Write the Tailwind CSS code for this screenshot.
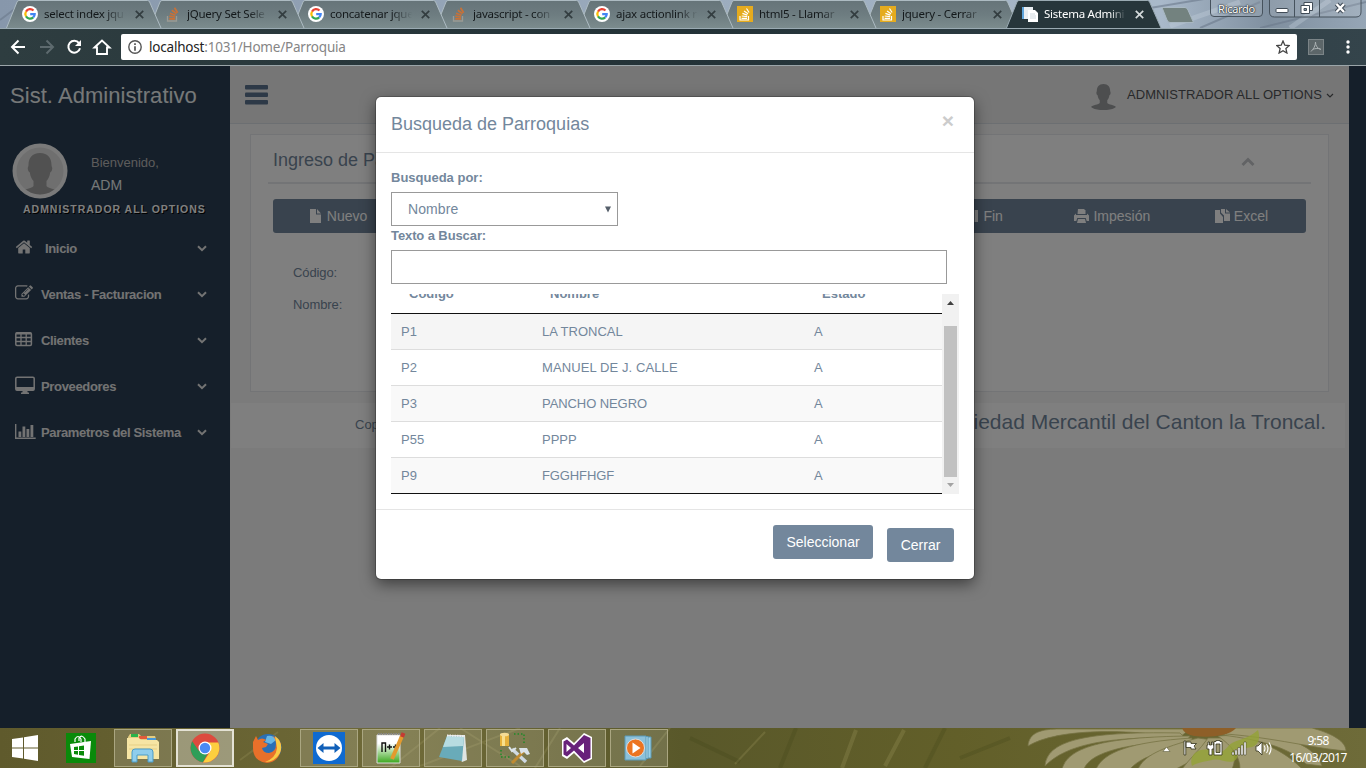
<!DOCTYPE html>
<html lang="es">
<head>
<meta charset="utf-8">
<title>Sistema Administrativo</title>
<script src="https://cdn.jsdelivr.net/npm/@tailwindcss/browser@4"></script>
</head>
<body class="w-[1366px] h-[768px] overflow-hidden flex flex-col font-['Liberation_Sans',sans-serif] text-[13px] text-[#73879C]">
<svg class="absolute w-0 h-0">
  <defs>
    <linearGradient id="tabg" x1="0" y1="0" x2="0" y2="1"><stop offset="0" stop-color="#667479"/><stop offset=".5" stop-color="#6d7c80"/><stop offset="1" stop-color="#7b8b8d"/></linearGradient>
    <linearGradient id="sky" x1="0" y1="0" x2="1" y2="0"><stop offset="0" stop-color="#8797ab"/><stop offset=".85" stop-color="#a9b9ca"/><stop offset=".93" stop-color="#7f8f9f"/><stop offset="1" stop-color="#96a6b6"/></linearGradient>
  </defs>
  <symbol id="tab" viewBox="0 0 156 28"><path d="M.5 28L11 2Q11.500 .5 13 .5H141.500Q143 .5 143.600 2L155 28" fill="url(#tabg)" stroke="#adbbc2" stroke-width="1"/></symbol>
  <symbol id="goog" viewBox="0 0 16 16"><circle cx="8" cy="8" r="8" fill="#fff"/><g fill="none" stroke-width="2.200"><path d="M11.500 4.600A4.700 4.700 0 0 0 4 5.600" stroke="#ea4335"/><path d="M4 5.600A4.700 4.700 0 0 0 4 10.400" stroke="#fbbc05"/><path d="M4 10.400A4.700 4.700 0 0 0 11.200 11.400" stroke="#34a853"/><path d="M11.200 11.400A4.700 4.700 0 0 0 12.700 8.100H8.200" stroke="#4285f4"/></g></symbol>
  <symbol id="so" viewBox="0 0 16 16"><path d="M2.500 10v5h9v-5" fill="none" stroke="#9a9a94" stroke-width="1.300"/><g stroke="#c87137" stroke-width="1.700"><path d="M4.200 12.800h5.800M4.300 10.200l5.800.8M5 7.200l5.500 2M6.800 4.300l4.700 3.300M9.500 1.700l3.200 5"/></g></symbol>
  <symbol id="soy" viewBox="0 0 16 16"><path d="M0 0h16v16H0z" fill="#e5ab1e"/><path d="M3 10v4h8.500v-4" fill="none" stroke="#fff" stroke-width="1.200"/><path d="M4.600 12.300h5.400M4.700 10l5.500.6M5.400 7.400l5 1.700M7 5l4 2.800M9.500 2.500l2.600 4" stroke="#fff" stroke-width="1.200"/></symbol>
  <symbol id="x" viewBox="0 0 8 8"><path d="M.7.700l6.600 6.600M7.300.700L.7 7.300" stroke="currentColor" stroke-width="1.500"/></symbol>
  <symbol id="down" viewBox="0 0 10 7"><path d="M1 1.200l4 3.900 4-3.900" fill="none" stroke="currentColor" stroke-width="2"/></symbol>
  <symbol id="person" viewBox="0 0 50 50"><path d="M25 5c-8 0-11.500 5-11.500 12 0 2-1 2-.7 4 .3 2.500 1.500 3 2 3.500.5 4 2 6.500 3.700 8.500v5C17 41 6 41 3.500 45 10 52 40 52 46.500 45 44 41 33 41 31.500 38v-5c1.700-2 3.200-4.500 3.700-8.500.5-.5 1.700-1 2-3.500.3-2-.7-2-.7-4C36.500 10 33 5 25 5z" fill="currentColor"/></symbol>
</svg>

<!-- Browser window -->
<header class="relative h-[66px] shrink-0 flex flex-col bg-[#2b393e] font-['Noto_Sans',sans-serif]">
  <div class="relative h-[29px] flex border-b border-[#9aaab2] overflow-hidden">
    <svg class="absolute inset-0" width="1366" height="28"><rect width="1366" height="28" fill="url(#sky)"/><path d="M0 20L24 2M1090 18l120-20M1200 28l60-26M1260 28l106-26" stroke="#6c7a8c" stroke-width="2" opacity=".6"/><path d="M1170 26l70-24M1290 28l40-28" stroke="#c6d2de" stroke-width="5" opacity=".35"/></svg>
    <div class="relative flex pl-[6px] text-[11.5px] tracking-[-0.25px] text-[#14191b] leading-[28px]">
      <div class="relative z-[8] w-[143px] h-7 flex items-center pl-4"><svg class="absolute left-0 top-0" width="156" height="28"><use href="#tab"/></svg><svg class="relative" width="16" height="16"><use href="#goog"/></svg><span class="relative ml-1.5 w-[82px] whitespace-nowrap [mask-image:linear-gradient(90deg,#000_75%,transparent)]">select index jqu</span><svg class="relative ml-[9px] text-[#333d40]" width="9" height="9"><use href="#x"/></svg></div>
      <div class="relative z-[7] w-[143px] h-7 flex items-center pl-4"><svg class="absolute left-0 top-0" width="156" height="28"><use href="#tab"/></svg><svg class="relative" width="16" height="16"><use href="#so"/></svg><span class="relative ml-1.5 w-[82px] whitespace-nowrap [mask-image:linear-gradient(90deg,#000_75%,transparent)]">jQuery Set Sele</span><svg class="relative ml-[9px] text-[#333d40]" width="9" height="9"><use href="#x"/></svg></div>
      <div class="relative z-[6] w-[143px] h-7 flex items-center pl-4"><svg class="absolute left-0 top-0" width="156" height="28"><use href="#tab"/></svg><svg class="relative" width="16" height="16"><use href="#goog"/></svg><span class="relative ml-1.5 w-[82px] whitespace-nowrap [mask-image:linear-gradient(90deg,#000_75%,transparent)]">concatenar jque</span><svg class="relative ml-[9px] text-[#333d40]" width="9" height="9"><use href="#x"/></svg></div>
      <div class="relative z-[5] w-[143px] h-7 flex items-center pl-4"><svg class="absolute left-0 top-0" width="156" height="28"><use href="#tab"/></svg><svg class="relative" width="16" height="16"><use href="#so"/></svg><span class="relative ml-1.5 w-[82px] whitespace-nowrap [mask-image:linear-gradient(90deg,#000_75%,transparent)]">javascript - con</span><svg class="relative ml-[9px] text-[#333d40]" width="9" height="9"><use href="#x"/></svg></div>
      <div class="relative z-[4] w-[143px] h-7 flex items-center pl-4"><svg class="absolute left-0 top-0" width="156" height="28"><use href="#tab"/></svg><svg class="relative" width="16" height="16"><use href="#goog"/></svg><span class="relative ml-1.5 w-[82px] whitespace-nowrap [mask-image:linear-gradient(90deg,#000_75%,transparent)]">ajax actionlink r</span><svg class="relative ml-[9px] text-[#333d40]" width="9" height="9"><use href="#x"/></svg></div>
      <div class="relative z-[3] w-[143px] h-7 flex items-center pl-4"><svg class="absolute left-0 top-0" width="156" height="28"><use href="#tab"/></svg><svg class="relative" width="16" height="16"><use href="#soy"/></svg><span class="relative ml-1.5 w-[82px] whitespace-nowrap [mask-image:linear-gradient(90deg,#000_75%,transparent)]">html5 - Llamar</span><svg class="relative ml-[9px] text-[#333d40]" width="9" height="9"><use href="#x"/></svg></div>
      <div class="relative z-[2] w-[142px] h-7 flex items-center pl-4"><svg class="absolute left-0 top-0" width="156" height="28"><use href="#tab"/></svg><svg class="relative" width="16" height="16"><use href="#soy"/></svg><span class="relative ml-1.5 w-[82px] whitespace-nowrap [mask-image:linear-gradient(90deg,#000_75%,transparent)]">jquery - Cerrar</span><svg class="relative ml-[9px] text-[#333d40]" width="9" height="9"><use href="#x"/></svg></div>
      <div class="relative z-[9] w-[143px] h-7 flex items-center pl-4 text-white"><svg class="absolute left-0 top-0" width="156" height="28"><path d="M.5 28L11 2Q11.500 .5 13 .5H141.500Q143 .5 143.600 2L155 28" fill="#27363b" stroke="#9aaab2"/></svg><svg class="relative" width="16" height="16"><path d="M0 1h9v12H0z" fill="#5fa5dc"/><path d="M2 1h9v12H2z" fill="#e9eef2"/><path d="M6 4h7l3 3v9H6z" fill="#fff"/><path d="M8 8h5M8 10h6M8 12h6" stroke="#cdd6dc"/></svg><span class="relative ml-1.5 w-[82px] whitespace-nowrap [mask-image:linear-gradient(90deg,#000_80%,transparent)]">Sistema Admini</span><svg class="relative ml-[9px] text-[#d5dadc]" width="9" height="9"><use href="#x"/></svg></div>
    </div>
    <svg class="relative ml-3 mt-[7px]" width="34" height="17"><path d="M1 .5H24Q26 .5 27 3L32.500 15.500H9Q7 15.500 6 13z" fill="#73827f" stroke="#a9b8c2"/></svg>
    <div class="relative ml-[15px] mt-[-1px] h-[18px] w-[53px] border border-[#46525d] rounded-b text-center text-[11px] leading-[18px] tracking-[-0.3px] text-white [text-shadow:0_0_2px_#000,0_0_1px_#000] bg-white/10">Ricardo</div>
    <svg class="relative ml-[6px]" width="93" height="19"><path d="M.5 0v12q0 5 5 5H87q5 0 5-5V0M25.500 0v17M50.500 0v17" fill="#fff" fill-opacity=".12" stroke="#46525d"/><rect x="7" y="8.500" width="12" height="4" rx="1" fill="#fff" stroke="#414c57"/><g fill="#fff" stroke="#414c57"><path d="M35 2.500h8.500v8H35z"/><path d="M32 5.500h8.500v8H32z"/><path d="M35 8.500h2.500v2H35z" fill="#8a9aaa"/></g><path d="M67.500 4l7.500 8M75 4l-7.500 8" stroke="#414c57" stroke-width="4.500"/><path d="M67.500 4l7.500 8M75 4l-7.500 8" stroke="#fff" stroke-width="2.400"/></svg>
  </div>
  <div class="flex h-[37px] items-center border-b border-[#9ba5a9] bg-linear-to-r from-[#2e3d40] via-[#233237] to-[#34444b]">
    <svg class="ml-[10px]" width="110" height="18" fill="none" stroke="#fff" stroke-width="2"><path d="M15 9H2.500M8.500 2.500L2 9l6.500 6.500"/><path d="M30 9h12.500M36.500 2.500L43 9l-6.500 6.500" stroke="#5d6a6e"/><path d="M69 5.200A5.900 5.900 0 1 0 70 10.200"/><path d="M71 2v6h-6z" fill="#fff" stroke="none"/><path d="M84.500 9.500L92 2.500l7.500 7H97V16H87V9.500z" stroke-width="1.900"/></svg>
    <div class="flex items-center h-[26px] w-[1176px] bg-white rounded-[2px] ml-[1px] px-[7px]">
      <svg width="14" height="14"><circle cx="7" cy="7" r="6.200" fill="none" stroke="#555" stroke-width="1.400"/><path d="M7 3.200v1.800M7 6.200v4.600" stroke="#555" stroke-width="1.700"/></svg>
      <span class="ml-[7px] text-[13.5px] tracking-[-0.2px] text-[#858585]"><span class="text-[#222]">localhost</span>:1031/Home/Parroquia</span>
      <svg class="ml-auto" width="14" height="14"><path d="M7 1l1.800 4.200 4.500.4-3.400 3 1 4.400L7 10.700 3.100 13l1-4.400-3.400-3 4.500-.4z" fill="none" stroke="#444" stroke-width="1.300"/></svg>
    </div>
    <svg class="ml-[11px]" width="16" height="16"><rect x=".5" y=".5" width="15" height="15" fill="#5c6669" stroke="#7b8487"/><path d="M7.500 3c0 4-2 7-4.500 9.500M7.500 3c0 4 2 6.500 5.500 7.500M4.500 10.500c2-1 5-1.500 8-.5" fill="none" stroke="#a9b0b2"/></svg>
    <svg class="ml-[22px]" width="4" height="14" fill="#fff"><circle cx="2" cy="2" r="1.700"/><circle cx="2" cy="7" r="1.700"/><circle cx="2" cy="12" r="1.700"/></svg>
  </div>
</header>

<!-- Application -->
<main class="relative h-[662px] shrink-0 flex bg-[#2A3F54] overflow-hidden">
  <aside class="w-[230px] shrink-0 text-[#E7E7E7]">
    <div class="h-[58px] pl-[10px] text-[22px] leading-[59px] tracking-[0.05px] text-[#ECF0F1]">Sist. Administrativo</div>
    <div class="flex pl-3 mt-[19px] h-[56px]">
      <svg width="56" height="56"><circle cx="28" cy="28" r="27.500" fill="#f4f4f4"/><circle cx="28" cy="28" r="23.500" fill="#dedede"/><clipPath id="av"><circle cx="28" cy="28" r="23.500"/></clipPath><g clip-path="url(#av)" color="#a3a3a3"><svg x="3" y="5" width="50" height="50"><use href="#person"/></svg></g></svg>
      <div class="ml-[23px] pt-[10px]"><div class="text-[13px] leading-[20px] text-[#BAB8B8]">Bienvenido,</div><div class="text-[14px] leading-[25px] text-[#ECF0F1]">ADM</div></div>
    </div>
    <div class="pl-[23px] pt-px h-[27px] text-[10.5px] leading-[18px] font-bold tracking-[0.98px] text-white [text-shadow:1px_1px_#000] whitespace-nowrap">ADMNISTRADOR ALL OPTIONS</div>
    <nav class="text-[13px] font-bold tracking-[-0.34px] [&>div]:h-[46px] [&>div]:flex [&>div]:items-center [&>div]:pl-[15px] [&>div]:pr-[23px] [&>div>svg:last-child]:ml-auto [&>div>svg:last-child]:-mt-[2px]">
      <div><svg class="w-[18px] h-[18px] -mt-1" viewBox="0 0 1792 1792" fill="currentColor"><path d="M1472 992v480q0 26-19 45t-45 19h-384v-384h-256v384h-384q-26 0-45-19t-19-45v-480q0-1 .5-3t.5-3l575-474 575 474q1 2 1 6zm223-69l-62 74q-8 9-21 11h-3q-13 0-21-7l-692-577-692 577q-12 8-24 7-13-2-21-11l-62-74q-8-10-7-23.500t11-21.500l719-599q32-26 76-26t76 26l244 204v-195q0-14 9-23t23-9h192q14 0 23 9t9 23v408l219 182q10 8 11 21.500t-7 23.500z"/></svg><span class="ml-[12px]">Inicio</span><svg width="10" height="7"><use href="#down"/></svg></div>
      <div><svg class="w-[18px] h-[18px] -mt-1" viewBox="0 0 1792 1792" fill="currentColor"><path d="M888 1184l116-116-152-152-116 116v56h96v96h56zm440-720q-16-16-33 1l-350 350q-17 17-1 33t33-1l350-350q17-17 1-33zm80 594v190q0 119-84.500 203.500t-203.500 84.500h-832q-119 0-203.500-84.500t-84.500-203.500v-832q0-119 84.500-203.500t203.500-84.500h832q63 0 117 25 15 7 18 23 3 17-9 29l-49 49q-14 14-32 8-23-6-45-6h-832q-66 0-113 47t-47 113v832q0 66 47 113t113 47h832q66 0 113-47t47-113v-126q0-13 9-22l64-64q15-15 35-7t20 29zm-96-738l288 288-672 672h-288v-288zm444 132l-92 92-288-288 92-92q28-28 68-28t68 28l152 152q28 28 28 68t-28 68z"/></svg><span class="ml-[8px]">Ventas - Facturacion</span><svg width="10" height="7"><use href="#down"/></svg></div>
      <div><svg class="-mt-1" width="18" height="16" fill="none" stroke="currentColor"><rect x=".8" y="1.800" width="15.600" height="12.600" rx="1.200" stroke-width="1.500"/><path d="M1 2.500h15" stroke-width="2"/><path d="M1 6.500h15M1 10.500h15M6 2v12M11.200 2v12" stroke-width="1.300"/></svg><span class="ml-[8px]">Clientes</span><svg width="10" height="7"><use href="#down"/></svg></div>
      <div><svg class="-mt-1" width="20" height="18"><rect x=".8" y="1.300" width="18.400" height="13" rx="1.300" fill="none" stroke="currentColor" stroke-width="1.500"/><path d="M1 11h18v3.200H1zM8 14h4l.8 2.500H14V18H6v-1.500h1.200z" fill="currentColor"/></svg><span class="ml-[6px]">Proveedores</span><svg width="10" height="7"><use href="#down"/></svg></div>
      <div><svg class="-mt-1" width="21" height="17"><path d="M.7 1v14.300h20" fill="none" stroke="currentColor" stroke-width="1.400"/><path d="M3.500 8.500h2.800V14H3.500zM7.500 3.500h2.800V14H7.500zM11.500 6h2.800v8h-2.800zM15.500 2h2.800v12h-2.800z" fill="currentColor"/></svg><span class="ml-[5px]">Parametros del Sistema</span><svg width="10" height="7"><use href="#down"/></svg></div>
    </nav>
  </aside>
  <section class="w-[1119px] shrink-0 bg-[#F7F7F7]">
    <div class="h-[58px] flex items-center bg-[#EDEDED] border-b border-[#D9DEE4] pl-[15px] pr-[15px]">
      <svg width="23" height="20" fill="#5A738E"><rect width="23" height="4.500" rx="1"/><rect y="7.500" width="23" height="4.500" rx="1"/><rect y="15" width="23" height="4.500" rx="1"/></svg>
      <svg class="ml-auto text-[#9a9c9f] mt-[2px]" width="29" height="29"><use href="#person"/></svg>
      <span class="ml-[9px] text-[13px] tracking-[0.08px] text-[#515356]">ADMNISTRADOR ALL OPTIONS</span>
      <svg class="ml-1 mt-0.5" width="8" height="6"><path d="M1 1l3 3 3-3" fill="none" stroke="#515356" stroke-width="1.200"/></svg>
    </div>
    <div class="ml-5 mt-[10px] w-[1079px] h-[258px] bg-white border border-[#E6E9ED] px-[17px]">
      <div class="h-[49px] flex items-center justify-between border-b-2 border-[#E6E9ED] pl-[5px] pr-[56px] pt-[3px]">
        <h2 class="text-[18px]">Ingreso de Parroquias</h2>
        <svg class="mt-1" width="14" height="10"><path d="M1.500 8L7 2.500 12.500 8" fill="none" stroke="#C5C7CB" stroke-width="3"/></svg>
      </div>
      <div class="mt-[15px] mx-[5px] w-[1033px] h-[34px] grid grid-cols-8 bg-[#73879C] rounded-[3px] text-[14px] text-white [&>div]:flex [&>div]:items-center [&>div]:justify-center [&>div]:gap-[5px]">
        <div class="pl-px"><svg width="13" height="15" fill="#fff"><path d="M1 0h6v5.500h5V14H1zM8 0l4 4.500H8z"/></svg>Nuevo</div>
        <div></div><div></div><div></div><div></div>
        <div class="pl-[2px]"><svg width="13" height="14" fill="#fff"><path d="M0 1l9 6-9 6zM9.500 1H13v12H9.500z"/></svg>Fin</div>
        <div class="!gap-[4px]"><svg width="15" height="14" fill="#fff"><path d="M4 0h6l1.500 1.500V5h-8z"/><path d="M0 6.500L2 4.500V6h11V4.500l2 2V12h-2.300l-1-3H3.300l-1 3H0z"/><path d="M4 10h7l1 4H3z"/></svg>Impesión</div>
        <div class="!gap-[4px]"><svg width="15" height="15" fill="#fff"><path d="M0 1h5v3.500L8 8v6H0z"/><path d="M6 0h4v4.500h5V12H9V6.500L6 3.500zM11 0l4 3.500h-4z"/></svg>Excel</div>
      </div>
      <div class="pl-[25px] mt-[24px] leading-8 tracking-[-0.1px]"><div>Código:</div><div>Nombre:</div></div>
    </div>
    <footer class="mt-[11px] ml-px w-[1114px] h-[45px] bg-white flex justify-between pl-[124px] pr-[19px] whitespace-nowrap">
      <span class="leading-[44px]">Copyright</span>
      <span class="text-[21px] leading-[37px]">Sociedad Mercantil del Canton la Troncal.</span>
    </footer>
  </section>
  <div class="absolute inset-0 bg-black/50"></div>

  <!-- Dialog -->
  <div class="absolute left-[376px] top-[31px] w-[598px] h-[482px] bg-white rounded-[5px] shadow-[0_5px_15px_rgba(0,0,0,.5),0_0_0_1px_rgba(0,0,0,.2)] flex flex-col">
    <div class="h-[56px] shrink-0 flex justify-between border-b border-[#e5e5e5] pl-[15px] pr-[20px]">
      <h4 class="text-[18px] leading-[54px]">Busqueda de Parroquias</h4>
      <span class="text-[21px] font-bold leading-[48px] text-[#ccc]">×</span>
    </div>
    <div class="h-[357px] shrink-0 border-b border-[#e5e5e5] px-[15px] pt-[15px]">
      <div class="font-bold leading-5 h-6">Busqueda por:</div>
      <div class="w-[227px] h-[34px] border border-[#999] flex items-center justify-between pl-4 pr-[6px] text-[14px] tracking-[0.1px]">Nombre<svg width="6" height="7"><path d="M0 .5h6L3 6.500z" fill="#555f6a"/></svg></div>
      <div class="font-bold leading-5 h-6 tracking-[-0.1px]">Texto a Buscar:</div>
      <div class="w-[556px] h-[34px] border border-[#999]"></div>
      <div class="mt-[10px] h-[200px] w-[568px] flex overflow-hidden">
        <div class="w-[551px] h-full">
          <div class="-mt-[17px] h-[37px] border-b border-[#111] grid grid-cols-[141px_272px_138px] font-bold leading-[33px] [&>span]:pl-[18px]"><span>Código</span><span>Nombre</span><span>Estado</span></div>
          <div class="leading-[35px] [&>div]:grid [&>div]:grid-cols-[141px_272px_138px] [&>div]:h-9 [&>div]:border-b [&>div]:border-[#ddd] [&_span]:pl-[10px]">
            <div class="bg-[#f5f5f5]"><span>P1</span><span>LA TRONCAL</span><span>A</span></div>
            <div><span>P2</span><span class="tracking-[0.1px]">MANUEL DE J. CALLE</span><span>A</span></div>
            <div class="bg-[#f9f9f9]"><span>P3</span><span class="tracking-[-0.08px]">PANCHO NEGRO</span><span>A</span></div>
            <div><span>P55</span><span>PPPP</span><span>A</span></div>
            <div class="bg-[#f9f9f9] !border-[#111]"><span>P9</span><span class="tracking-[-0.12px]">FGGHFHGF</span><span>A</span></div>
          </div>
        </div>
        <div class="w-[17px] h-full bg-[#f1f1f1] flex flex-col items-center">
          <svg class="mt-[7px]" width="7" height="4"><path d="M0 4L3.500 0 7 4z" fill="#404040"/></svg>
          <div class="mt-[21px] w-[13px] h-[151px] bg-[#c1c1c1]"></div>
          <svg class="mt-[6px]" width="7" height="4"><path d="M0 0L3.500 4 7 0z" fill="#a3a3a3"/></svg>
        </div>
      </div>
    </div>
    <div class="flex justify-end gap-[14px] pr-5 pt-[15px] text-[14px] text-white">
      <div class="w-[100px] h-[34px] rounded-[3px] bg-[#73879C] text-center leading-[34px]">Seleccionar</div>
      <div class="w-[67px] h-[34px] mt-[3px] rounded-[3px] bg-[#73879C] text-center leading-[34px]">Cerrar</div>
    </div>
  </div>
</main>

<!-- Taskbar -->
<footer class="relative h-10 shrink-0 flex items-center bg-[#625e2c] overflow-hidden">
  <svg class="absolute inset-0" width="1366" height="40">
    <defs><linearGradient id="tb" x1="0" x2="1" y1="0" y2="0"><stop offset="0" stop-color="#5f5a2c"/><stop offset=".3" stop-color="#6f6a38"/><stop offset=".5" stop-color="#59582a"/><stop offset=".7" stop-color="#625f29"/><stop offset="1" stop-color="#6e6b39"/></linearGradient></defs>
    <rect width="1366" height="40" fill="url(#tb)"/>
    <g stroke="#99935a" stroke-width="2" opacity=".3" fill="none"><path d="M240 32l38-28M420 38L520 0M460 0l60 38M535 40L560 0M640 38l30-38M735 36l30-32M390 40L440 0"/><path d="M842 40L856 2M885 38L904 2" stroke-width="4"/></g>
    <g stroke="#414318" stroke-width="4" opacity=".25" fill="none"><path d="M690 10l50 24M780 40l16-40M925 40l20-40M960 30l50-20"/></g>
    <g fill="#a09a72" stroke="#777345" stroke-width=".8">
      <path d="M1028 18C1029 4 1042 1 1060 1H1190L1180 9C1130 2 1060-1 1028 18z"/>
      <path d="M1045 38C1047 14 1080 3 1180 5L1185 10C1110 8 1066 16 1045 38z"/>
      <path d="M1062 41C1068 20 1100 9 1190 8L1186 14C1130 14 1090 24 1084 41z"/>
      <path d="M1096 41C1104 24 1130 14 1192 10L1192 18C1160 22 1140 30 1130 41z"/>
      <path d="M1138 41C1144 28 1160 20 1198 10L1212 12C1204 26 1190 34 1176 41z"/>
      <path d="M1182 41C1190 30 1200 22 1208 10L1224 10C1236 22 1236 32 1232 41z"/>
      <path d="M1240 41C1240 28 1232 18 1218 8L1236 7C1266 14 1288 26 1302 41z"/>
      <path d="M1306 36C1290 20 1262 12 1222 7L1240 2C1284 6 1316 18 1322 38z"/>
      <path d="M1346 23C1312 20 1276 10 1226 6L1230 0H1312C1334 6 1346 14 1346 23z"/>
    </g>
    <path d="M1182 0q2 6 12 8 16 2 28-1 10-2 14-7z" fill="#8e5f28"/>
    <path d="M1192 38c-4-12 8-20 22-15 12 4 12-6 20-9s18-6 24-12c2 6 2 14-6 17-8 2-14 0-20 4 6 0 8 6 2 10-6 3-14-3-22-1s-14 2-20 6z" fill="#93a236" opacity=".8"/>
  </svg>
  <svg class="relative ml-[12px]" width="27" height="27" fill="#fff"><path d="M0 4l11-1.500V12.500H0zM12 2.300L26 0v12.500H12zM0 13.500h11v10L0 22zM12 13.500h14V26l-14-2.300z"/></svg>
  <svg class="relative ml-[27px]" width="30" height="30"><path fill="#0a8a0a" d="M0 0h30v30H0z"/><path d="M9 9V6q3-5 6 0v3M13 8V5q3-4 6 1v3" fill="none" stroke="#fff" stroke-width="1.200"/><path d="M4 11l21-3-1.500 18L6 24z" fill="#fff"/><path d="M8 14l4-.6V17H8zm5-.7l5-.8V17h-5zM8 18h4v3.800L8 21zm5 0h5v4.700l-5-.8z" fill="#0a8a0a"/></svg>
  <div class="relative ml-[18px] flex gap-[4px] [&>div]:w-[58px] [&>div]:h-[38px] [&>div]:flex [&>div]:items-center [&>div]:justify-center">
    <div class="border border-[#aaa681] bg-white/15"><svg width="32" height="30"><path d="M1 4l2-3h9l2 2h14l1 3v18H1z" fill="#e3cc80"/><path d="M4 1h7v3H4z" fill="#29b34a"/><path d="M12 3h8v3h-8z" fill="#e25b3a"/><path d="M20 5h9v3h-9z" fill="#4a99d8"/><path d="M0 5h12l2 2h16l2 2v17H0z" fill="#f6e5a4"/><path d="M2 12h28M2 16h28" stroke="#e5cf85"/><path d="M5 29V19q0-3 3-3h15q3 0 3 3v10h-5v-7H10v7z" fill="#8fcdec" stroke="#4b9cc7"/></svg></div>
    <div class="border-2 border-[#e4e2d4] bg-white/35"><svg width="30" height="30"><circle cx="15" cy="15" r="14.500" fill="#dd4b3e"/><path d="M2.200 8.200A14.500 14.500 0 0 0 13 29.300L19 18 9 18z" fill="#2f9e58"/><path d="M28.300 9.500A14.500 14.500 0 0 1 13 29.400L20.500 18 17 9.500z" fill="#fdcf3f"/><circle cx="15" cy="15" r="6.500" fill="#fff"/><circle cx="15" cy="15" r="5.200" fill="#4a8af4"/></svg></div>
    <div><svg width="30" height="30"><circle cx="16" cy="14.500" r="13.500" fill="#2a6fb5"/><path d="M15 3q7-1 9 4l-5 4-6-2z" fill="#67b6e5"/><path d="M1 9l3-6 2 4q4-3 8 0l-3 2 5 2-2 3-4 1q1 5 7 5 7-1 7-9 0-6-4-8 10 2 9 13-2 13-14 14Q1 28 1 15z" fill="#e8702a"/><path d="M23 3q9 7 5 17-5 9-15 9 11-4 12-14z" fill="#f8cb45"/></svg></div>
    <div class="border border-[#aaa681] bg-white/15"><svg width="32" height="32"><path d="M0 0h32v32H0z" fill="#0f6ad0"/><circle cx="16" cy="16" r="13" fill="#fff"/><path d="M4.500 16l6-5v3.500h11V11l6 5-6 5v-3.500h-11V21z" fill="#1160b8"/></svg></div>
    <div class="border border-[#aaa681] bg-white/15"><svg width="32" height="32"><defs><linearGradient id="np" x1="0" y1="0" x2="0" y2="1"><stop offset=".3" stop-color="#fff"/><stop offset="1" stop-color="#3aa71c"/></linearGradient></defs><path d="M2 3h23v28H2z" fill="url(#np)" stroke="#ddd"/><path d="M3 2h22" stroke="#888" stroke-width="2" stroke-dasharray="1.500 1"/><path d="M7 20v-9h3.500v9M12 15h5M14.500 12.500v5M18 15h5M20.500 12.500v5" fill="none" stroke="#111" stroke-width="1.400"/><path d="M27 4L17 27" stroke="#e39a2d" stroke-width="4"/><path d="M28.500 1L27 5" stroke="#c43a32" stroke-width="4"/></svg></div>
    <div class="border border-[#aaa681] bg-white/15"><svg width="32" height="30"><path d="M10 2h18l2 25-5 2z" fill="#dfe5e3"/><path d="M10 3l17 1-2 24-23-4z" fill="#69abb9"/><path d="M10 3l17 1-1 9-20 1z" fill="#b7dce1"/><path d="M10 2.500l18 .5" stroke="#eee" stroke-width="2" stroke-dasharray="1.500 1"/></svg></div>
    <div class="border border-[#aaa681] bg-white/15"><svg width="32" height="32"><path d="M1 2h9v12H1z" fill="#e6b13c"/><path d="M3 2h3v12H3z" fill="#f9df8c"/><ellipse cx="5.500" cy="2.500" rx="4.500" ry="1.800" fill="#f5dc95"/><path d="M15 2h10v10M2 18v7h9" fill="none" stroke="#1f8a28" stroke-width="1.500" stroke-dasharray="1.500 2"/><path d="M13 17l14 13" stroke="#cfd9e2" stroke-width="3.500"/><path d="M25 19L13 31" stroke="#c08b31" stroke-width="3"/><path d="M20 16l8 0 3 6-3 1-3-3-3 2z" fill="#dbe3ea"/><path d="M10 15l3 4 4-3" fill="none" stroke="#dde5ea" stroke-width="2"/></svg></div>
    <div class="border border-[#aaa681] bg-white/15"><svg width="32" height="32"><path d="M1 8l5-3 7 6L23 1l8 4v22l-8 4-10-10-7 6-5-3z" fill="#fff"/><path d="M2.500 9.500L6 7.500l7 6L23 3l6.500 3v20L23 29 13 18.500l-7 6-3.500-2z" fill="#68217a"/><path d="M5.500 12l4.500 4-4.500 4zM23 11v10l-6-5z" fill="#fff"/></svg></div>
    <div class="border border-[#aaa681] bg-white/15"><svg width="30" height="28"><path d="M21 3h6v21h-6z" fill="#9bd0e8" stroke="#5b9ab7"/><path d="M18 2.500h6v22h-6z" fill="#b8e0f0" stroke="#5b9ab7"/><path d="M1 2h21v24H1z" fill="#8cc1da" stroke="#5b9ab7"/><circle cx="11.500" cy="14" r="9" fill="#ec7420" stroke="#ddd"/><path d="M8.500 8.500l8 5.500-8 5.500z" fill="#fff"/></svg></div>
  </div>
  <svg class="relative ml-auto" width="112" height="20"><path d="M1 13.500h7L4.500 9z" fill="#fff" stroke="#4b4a2b" stroke-width=".5"/><g fill="#fff" stroke="#33331c" stroke-width=".8"><path d="M22 3h1.800v14H22zM24 4h5v1.500h5.500L32 8l2 3h-5V9.500h-5z"/><path d="M46 4h1.500v3h2V4H51v3h1v4h-2v6h-3v-6h-2V7h1z"/><path d="M52 3.500h2v-1h4v1h2V17h-8zM54 6v8.500h4V6z" fill-rule="evenodd"/><path d="M70 14h2v3h-2zM73 12h2v5h-2zM76 9.500h2V17h-2zM79 7h2v10h-2zM82 4h2v13h-2z" stroke-width=".5"/><path d="M94 8h2l4-4v13l-4-4h-2z"/></g><path d="M102 7.500q2 3 0 6M104.500 6q3 4.500 0 9M107 4.500q4 6 0 12" fill="none" stroke="#fff" stroke-width="1.100"/></svg>
  <div class="relative w-[58px] mr-[19px] ml-[15px] pt-[2px] text-center text-[12px] leading-[17px] tracking-[-0.65px] text-white font-['Noto_Sans',sans-serif] whitespace-nowrap"><div>9:58</div><div>16/03/2017</div></div>
</footer>
</body>
</html>
